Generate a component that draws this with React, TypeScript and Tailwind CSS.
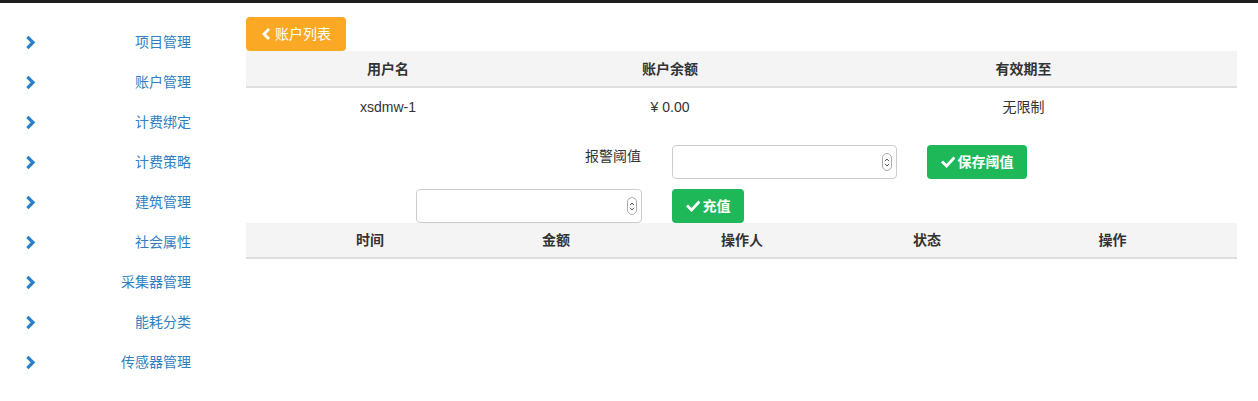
import React from 'react'

const font = { fontFamily: '"Liberation Sans", "Noto Sans CJK SC", sans-serif' }

const menu = ['项目管理', '账户管理', '计费绑定', '计费策略', '建筑管理', '社会属性', '采集器管理', '能耗分类', '传感器管理']

function ChevronRight() {
  return (
    <svg width="10" height="13" viewBox="0 0 10 13" className="shrink-0">
      <polyline points="2.5,2 7,6.5 2.5,11" fill="none" stroke="#2a7fc6" strokeWidth="3.2" strokeLinecap="square" strokeLinejoin="miter" />
    </svg>
  )
}

function ChevronLeft() {
  return (
    <svg width="10" height="12" viewBox="0 0 10 12" className="shrink-0">
      <polyline points="7,2 3,6 7,10" fill="none" stroke="#fff" strokeWidth="2.8" strokeLinecap="square" />
    </svg>
  )
}

function Check() {
  return (
    <svg width="14" height="12" viewBox="0 0 14 12" className="shrink-0">
      <polyline points="2,6.5 5.5,10 12.5,2.5" fill="none" stroke="#fff" strokeWidth="2.8" strokeLinecap="square" />
    </svg>
  )
}

function NumberInput({ width }: { width: string }) {
  return (
    <div className={`relative h-[34px] ${width}`}>
      <input className="w-full h-full rounded-[4px] border border-[#ccc] bg-white px-3 text-sm outline-none" />
      <span className="absolute right-[5px] top-[8px] w-[10px] h-[18px] rounded-full border border-[#aaa] bg-white flex flex-col items-center justify-center gap-[1px]">
        <svg width="6" height="4" viewBox="0 0 6 4">
          <polyline points="1,3.2 3,1 5,3.2" fill="none" stroke="#555" strokeWidth="1" />
        </svg>
        <svg width="6" height="4" viewBox="0 0 6 4">
          <polyline points="1,0.8 3,3 5,0.8" fill="none" stroke="#555" strokeWidth="1" />
        </svg>
      </span>
    </div>
  )
}

export default function App() {
  return (
    <div className="w-[1258px] h-[401px] bg-white text-[#333] text-sm overflow-hidden" style={font}>
      <div className="h-[3px] bg-[#1e1e1e]" />
      <div className="flex">
        <div className="w-[246px] shrink-0 pt-[19px]">
          {menu.map((m) => (
            <div key={m} className="h-[40px] flex items-center pl-[26px] pr-[55px]">
              <ChevronRight />
              <span className="flex-1 text-right text-[14px] text-[#2f7fc1]">{m}</span>
            </div>
          ))}
        </div>

        <div className="w-[991px] pt-[14px]">
          <button className="h-[34px] w-[100px] rounded-[4px] bg-[#fba824] text-white text-[14px] flex items-center justify-center gap-[4px]">
            <ChevronLeft />
            账户列表
          </button>

          <div className="flex h-[37px] items-center bg-[#f4f4f4] border-b-2 border-[#dedede] font-bold">
            <div className="w-[284px] text-center">用户名</div>
            <div className="w-[280px] text-center">账户余额</div>
            <div className="flex-1 text-center">有效期至</div>
          </div>
          <div className="flex h-[38px] items-center">
            <div className="w-[284px] text-center">xsdmw-1</div>
            <div className="w-[280px] text-center">¥ 0.00</div>
            <div className="flex-1 text-center">无限制</div>
          </div>

          <div className="flex mt-[19px] h-[34px]">
            <div className="w-[395px] text-right leading-[20px] pt-[1px]">报警阈值</div>
            <div className="ml-[31px]">
              <NumberInput width="w-[225px]" />
            </div>
            <button className="ml-[30px] h-[34px] w-[100px] rounded-[4px] bg-[#1eb858] text-white text-[14px] font-bold flex items-center justify-center gap-[3px]">
              <Check />
              保存阈值
            </button>
          </div>

          <div className="flex mt-[10px] h-[34px]">
            <div className="ml-[170px]">
              <NumberInput width="w-[226px]" />
            </div>
            <button className="ml-[30px] h-[34px] w-[72px] rounded-[4px] bg-[#1eb858] text-white text-[14px] font-bold flex items-center justify-center gap-[3px]">
              <Check />
              充值
            </button>
          </div>

          <div className="flex h-[36px] items-center bg-[#f4f4f4] border-b-2 border-[#dedede] font-bold">
            <div className="w-[248px] text-center">时间</div>
            <div className="w-[124px] text-center">金额</div>
            <div className="w-[248px] text-center">操作人</div>
            <div className="w-[122px] text-center">状态</div>
            <div className="flex-1 text-center">操作</div>
          </div>
        </div>
      </div>
    </div>
  )
}
